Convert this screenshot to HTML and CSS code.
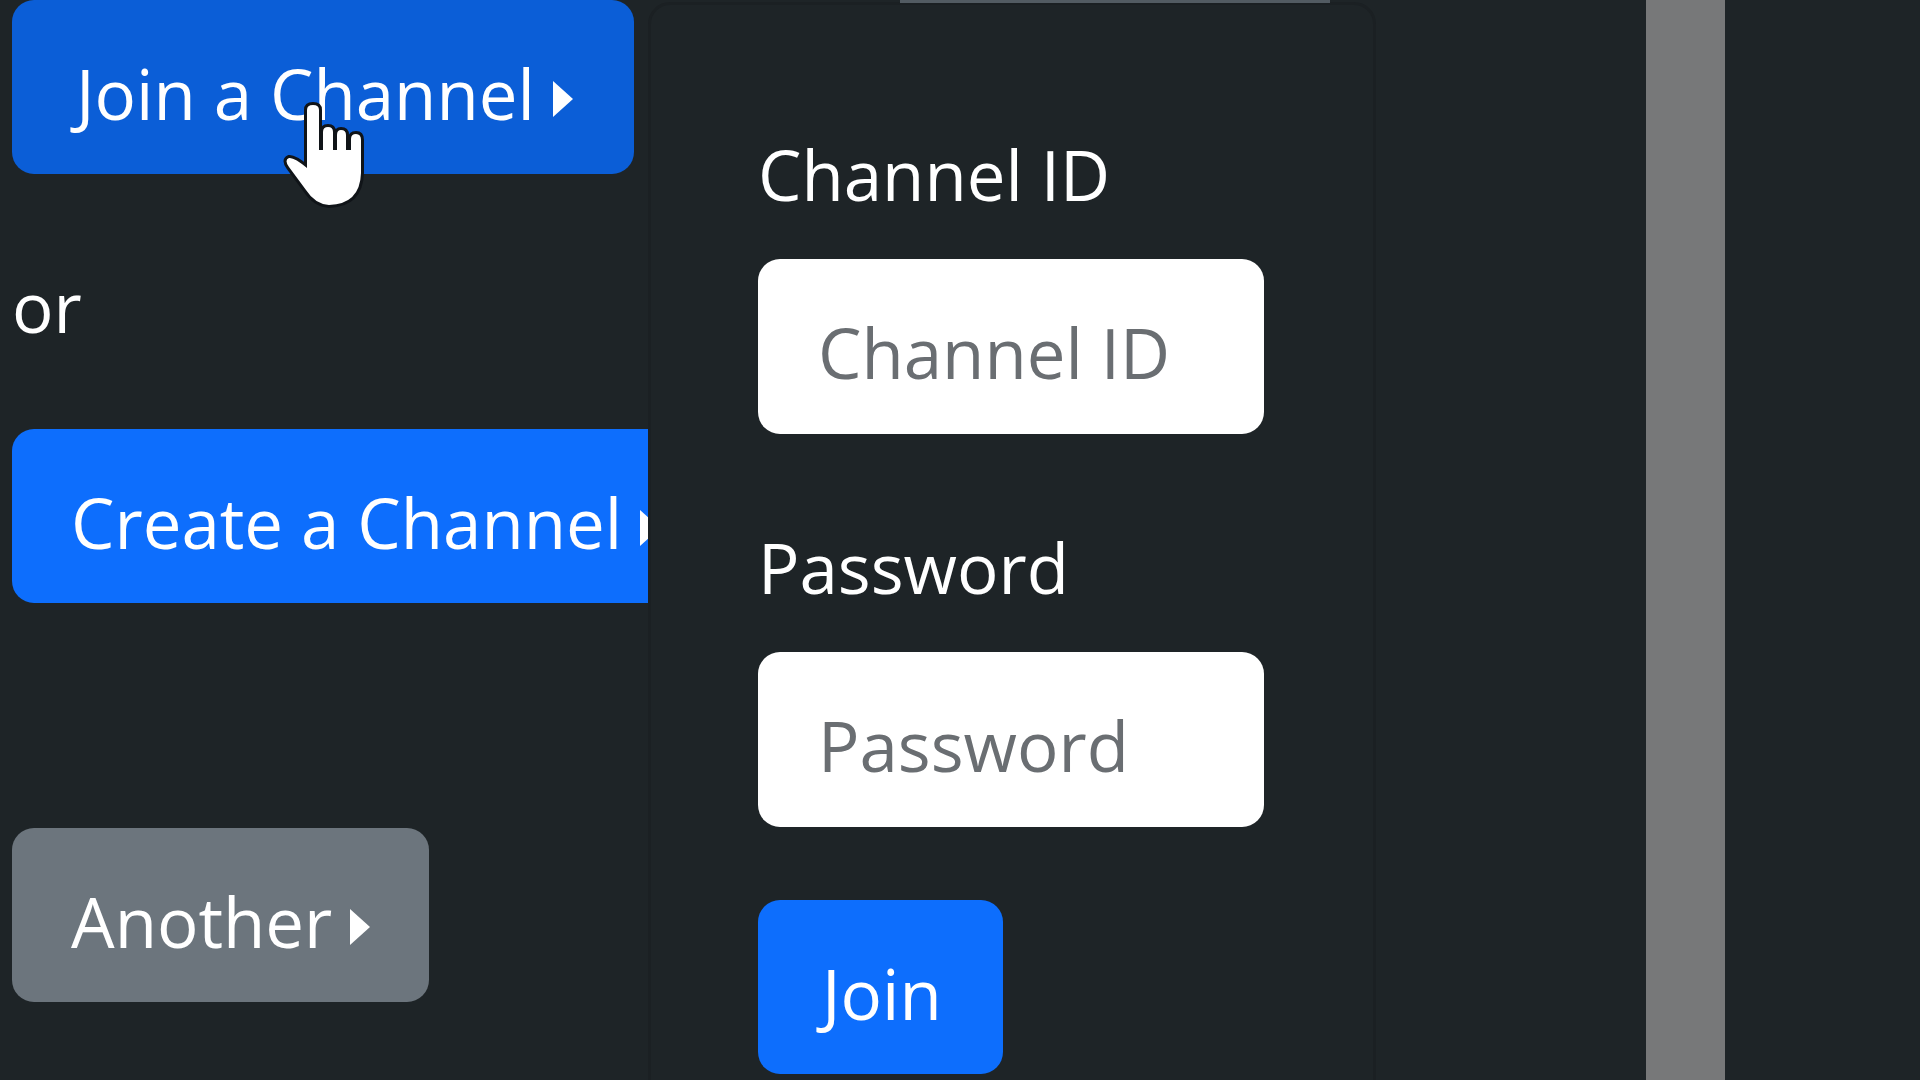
FILE: index.html
```html
<!DOCTYPE html>
<html lang="en">
<head>
<meta charset="utf-8">
<title>Channels</title>
<link rel="stylesheet" href="styles.css">
</head>
<body>
<main class="page">
  <div class="actions">
    <div class="dropend">
      <button class="btn btn-primary btn-join active" type="button" aria-expanded="true">Join a Channel<span class="caret"></span></button>
      <form class="menu">
        <div class="field">
          <label for="channel">Channel ID</label>
          <input id="channel" type="text" placeholder="Channel ID">
        </div>
        <div class="field">
          <label for="password">Password</label>
          <input id="password" type="password" placeholder="Password">
        </div>
        <button class="btn btn-primary btn-join" type="button">Join</button>
      </form>
      <svg class="pointer" viewBox="0 0 84 106" aria-hidden="true">
        <path d="M21 10Q21 5 27 5Q33 5 33 10V50H37V32Q37 27 42 27Q47 27 47 32V50H51V35Q51 30 55 30Q60 30 60 35V50H65V39Q65 34 70 34Q75 34 75 40V73Q74 104 43 105Q29 104 20 90L3 67Q-2 60 3 58Q8 57 21 68Z"/>
      </svg>
    </div>
    <p class="or">or</p>
    <button class="btn btn-primary" type="button">Create a Channel<span class="caret"></span></button>
    <button class="btn btn-secondary another" type="button">Another<span class="caret"></span></button>
  </div>
  <div class="strip"></div>
  <div class="divider"></div>
</main>
</body>
</html>
```
FILE: styles.css
```css
* { box-sizing: border-box; }
body {
  margin: 0;
  background: #1e2427;
  color: #fff;
  font: 69px/110px "Open Sans", "Noto Sans", sans-serif;
}
.page {
  display: grid;
  grid-template-columns: 900px 430px 1fr 79px 195px;
  min-height: 100vh;
  overflow: hidden;
}
.actions {
  display: flex;
  flex-direction: column;
  align-items: flex-start;
  padding-left: 12px;
}
.dropend { position: relative; }
.btn {
  display: flex;
  align-items: center;
  height: 174px;
  padding: 12px 59px 0;
  border: 0;
  border-radius: 22px;
  color: #fff;
  font: inherit;
  white-space: nowrap;
}
.btn-join { padding-right: 61px; padding-left: 64px; }
.btn-primary { background: #0d6efd; }
.btn-primary.active { background: #0b5ed7; }
.btn-secondary { background: #6c757d; }
.caret {
  margin-top: 12px;
  margin-left: 18px;
  border-top: 18px solid transparent;
  border-bottom: 18px solid transparent;
  border-left: 20px solid #fff;
}
.or { margin: 77px 0 68px; }
.another { margin-top: 225px; }
.menu {
  position: absolute;
  z-index: 1;
  top: 2px;
  left: 636px;
  width: 728px;
  height: 1100px;
  padding: 114px 109px 0 107px;
  border: 3px solid #1b2023;
  border-radius: 22px;
  background: #1e2427;
}
.field { margin-bottom: 73px; }
.field + .field { margin-top: 78px; }
label { display: block; margin-bottom: 30px; }
input {
  display: block;
  width: 100%;
  height: 175px;
  padding: 10px 60px 0;
  border: 0;
  border-radius: 22px;
  background: #fff;
  color: #212529;
  font: inherit;
}
input::placeholder { color: #6a6e72; opacity: 1; }
.pointer {
  position: absolute;
  z-index: 2;
  top: 100px;
  left: 274px;
  width: 84px;
  height: 106px;
  overflow: visible;
  fill: #fff;
  stroke: #101418;
  stroke-width: 6;
  paint-order: stroke;
}
.strip { height: 3px; background: #525b62; position: relative; z-index: 2; }
.divider { grid-column: 4; background: #777879; }
```
